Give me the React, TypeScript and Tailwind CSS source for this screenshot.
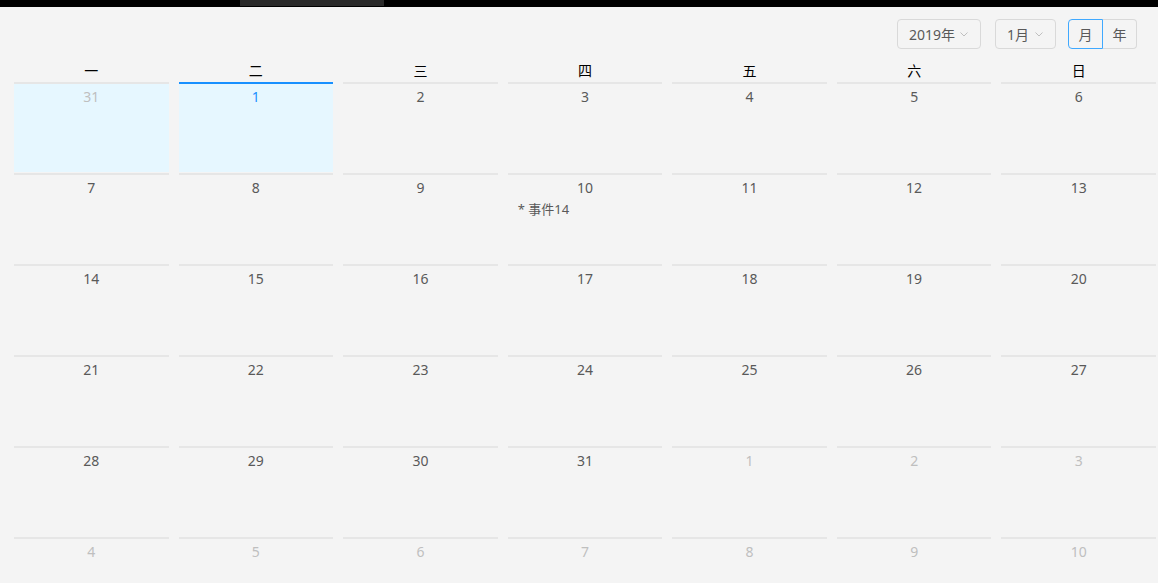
const weekdays = ["一", "二", "三", "四", "五", "六", "日"];

type Day = { n: number; other?: boolean; selected?: boolean; hover?: boolean; events?: string[] };

const weeks: Day[][] = [
  [{ n: 31, other: true, hover: true }, { n: 1, selected: true }, { n: 2 }, { n: 3 }, { n: 4 }, { n: 5 }, { n: 6 }],
  [{ n: 7 }, { n: 8 }, { n: 9 }, { n: 10, events: ["事件14"] }, { n: 11 }, { n: 12 }, { n: 13 }],
  [{ n: 14 }, { n: 15 }, { n: 16 }, { n: 17 }, { n: 18 }, { n: 19 }, { n: 20 }],
  [{ n: 21 }, { n: 22 }, { n: 23 }, { n: 24 }, { n: 25 }, { n: 26 }, { n: 27 }],
  [{ n: 28 }, { n: 29 }, { n: 30 }, { n: 31 }, { n: 1, other: true }, { n: 2, other: true }, { n: 3, other: true }],
  [
    { n: 4, other: true },
    { n: 5, other: true },
    { n: 6, other: true },
    { n: 7, other: true },
    { n: 8, other: true },
    { n: 9, other: true },
    { n: 10, other: true },
  ],
];

function Chevron() {
  return (
    <svg width="8" height="5" viewBox="0 0 8 5" fill="none" className="shrink-0">
      <path d="M0.5 0.5 L4 4 L7.5 0.5" stroke="#bfbfbf" strokeWidth="1" />
    </svg>
  );
}

function Select({ label, width }: { label: string; width: string }) {
  return (
    <div
      className={`${width} h-[30px] flex items-center justify-between pl-[11px] pr-[12px] border border-[#d9d9d9] rounded-[4px] text-[14px] text-[#595959]`}
    >
      <span>{label}</span>
      <Chevron />
    </div>
  );
}

function Cell({ day }: { day: Day }) {
  const bg = day.selected || day.hover ? "bg-[#e6f7ff]" : "";
  const border = day.selected ? "border-[#1890ff]" : "border-[#e6e6e6]";
  const color = day.selected ? "text-[#1890ff]" : day.other ? "text-[#bfbfbf]" : "text-[#595959]";
  return (
    <div className={`h-[90px] border-t-2 ${border} ${bg} pt-[3px]`}>
      <div className={`text-center text-[14px] leading-[20px] ${color}`}>{day.n}</div>
      {day.events?.map((e) => (
        <div key={e} className="pl-[10px] text-[13px] leading-[22px] text-[#595959]">
          * {e}
        </div>
      ))}
    </div>
  );
}

export default function App() {
  return (
    <div
      className="w-[1158px] h-[583px] overflow-hidden bg-[#f4f4f4]"
      style={{ fontFamily: '"Noto Sans", "Noto Sans CJK SC", sans-serif' }}
    >
      <div className="h-[7px] bg-black">
        <div className="ml-[240px] w-[144px] h-[6px] bg-[#2a2a2a]" />
      </div>

      <div className="flex justify-end items-center pt-[12px] pr-[21px]">
        <Select label="2019年" width="w-[84px]" />
        <div className="ml-[14px]">
          <Select label="1月" width="w-[61px]" />
        </div>
        <div className="ml-[12px] flex h-[30px] text-[14px] text-[#595959]">
          <div className="w-[35px] flex items-center justify-center border border-[#40a9ff] rounded-l-[4px]">月</div>
          <div className="w-[34px] flex items-center justify-center border border-l-0 border-[#d9d9d9] rounded-r-[4px]">
            年
          </div>
        </div>
      </div>

      <div className="pl-[14px] pr-[2px]">
        <div className="grid grid-cols-7 gap-x-[10px] pt-[12px] pb-[1px]">
          {weekdays.map((w) => (
            <div key={w} className="text-center text-[14px] leading-[20px] text-black">
              {w}
            </div>
          ))}
        </div>
        <div className="grid grid-cols-7 gap-x-[10px] gap-y-[1px]">
          {weeks.flat().map((d, i) => (
            <Cell key={i} day={d} />
          ))}
        </div>
      </div>
    </div>
  );
}
